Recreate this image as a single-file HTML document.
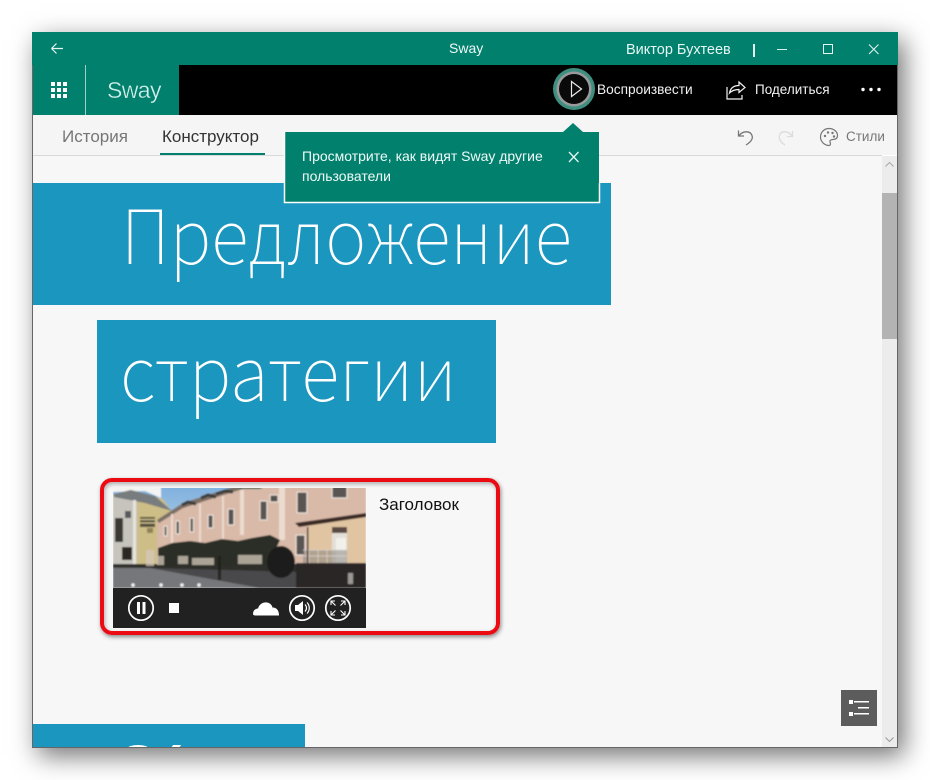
<!DOCTYPE html>
<html lang="ru">
<head>
<meta charset="utf-8">
<title>Sway</title>
<style>
html,body{margin:0;padding:0;width:930px;height:780px;overflow:hidden;background:#fff;font-family:"Liberation Sans",sans-serif}
.abs,.t{position:absolute}
.t{white-space:nowrap;line-height:1}
#win{position:absolute;left:32px;top:32px;width:866px;height:716px;box-shadow:6px 8px 24px rgba(0,0,0,.55)}
svg{position:absolute;overflow:visible}
.big{color:#fff;transform-origin:0 0;font-size:75px;font-family:"Noto Sans CJK JP","Noto Sans CJK SC",sans-serif;font-weight:100}
</style>
</head>
<body>
<div id="win" class="abs"></div>
<div class="abs" style="left:33px;top:155px;width:849px;height:592px;background:#f7f7f7"></div>
<!-- title bar -->
<div class="abs" style="left:32px;top:32px;width:866px;height:33px;background:#02806e"></div>
<div class="abs" style="left:33px;top:65px;width:146px;height:50px;background:#02806e"></div>
<div class="abs" style="left:179px;top:65px;width:718px;height:50px;background:#000"></div>
<div class="abs" style="left:33px;top:115px;width:864px;height:40px;background:#f5f5f5"></div>
<div class="abs" style="left:33px;top:155px;width:849px;height:1px;background:#d9d9d9"></div>

<svg style="left:0;top:0" width="930" height="780" fill="none">
 <path d="M51.5 48.500H63M51.500 48.500L56.500 43.500M51.500 48.500L56.500 53.500" stroke="#e8f5f2" stroke-width="1.200"/>
 <g fill="#fff">
  <rect x="51" y="82" width="4" height="4"/><rect x="57" y="82" width="4" height="4"/><rect x="63" y="82" width="4" height="4"/>
  <rect x="51" y="88" width="4" height="4"/><rect x="57" y="88" width="4" height="4"/><rect x="63" y="88" width="4" height="4"/>
  <rect x="51" y="94" width="4" height="4"/><rect x="57" y="94" width="4" height="4"/><rect x="63" y="94" width="4" height="4"/>
 </g>
 <rect x="85" y="65" width="1" height="50" fill="#9fd0c7"/>
 <rect x="753" y="44" width="2" height="13" fill="#e0f3ef"/>
 <rect x="777" y="49" width="10" height="1" fill="#d8efea"/>
 <rect x="823.500" y="44.500" width="9" height="9" stroke="#e8f5f2"/>
 <path d="M869 44.500L878.500 54M878.500 44.500L869 54" stroke="#e8f5f2"/>
 <!-- play -->
 <circle cx="574" cy="89" r="21" fill="#3f8f80"/>
 <circle cx="574" cy="89" r="17.500" fill="#9a9a9a"/>
 <circle cx="574" cy="89" r="15" fill="#0a0a0a"/>
 <path d="M571.500 81.500L581.500 89L571.500 96.500Z" stroke="#e8e8e8" stroke-width="1.200"/>
 <!-- share -->
 <path d="M727 87V99H742V95M729.500 93C730.500 88 734 85.500 739 85.500V82L745 87.500L739 92.500V89.500C735 89.500 732 90.500 729.500 93Z" stroke="#f2f2f2" stroke-width="1.200"/>
 <g fill="#fff"><circle cx="863" cy="89.500" r="1.700"/><circle cx="871" cy="89.500" r="1.700"/><circle cx="879" cy="89.500" r="1.700"/></g>
 <!-- undo -->
 <path d="M738.500 130.500V136H744M739 136C742 131 750 130 752 135.500C753.500 139.500 750 142.500 746 145" stroke="#777" stroke-width="1.300"/>
 <path d="M792.500 131V136.500H787M792 136C789 131 781 130 779.500 135.500C778.500 139.500 781 142.500 785 145" stroke="#dcdcdc" stroke-width="1.300"/>
 <!-- palette -->
 <path d="M829 128.500C824 128.500 820.500 132.500 820.500 137C820.500 141.500 824.500 145.500 829 145.500C831 145.500 830.500 143 830 142C829.500 140.500 831 139.500 833 139.500C836 139.500 837.500 138 837.500 135.500C837.500 131.500 833.500 128.500 829 128.500Z" stroke="#777" stroke-width="1.200"/>
 <g fill="#777"><circle cx="825" cy="136" r="1.200"/><circle cx="828" cy="132.500" r="1.200"/><circle cx="832.500" cy="133" r="1.200"/><circle cx="834" cy="136.500" r="1.200"/></g>
 <rect x="160" y="153" width="105" height="2" fill="#02806e"/>
</svg>

<div class="t" style="left:449px;top:41px;font-size:14px;color:#f0faf8">Sway</div>
<div class="t" style="left:626px;top:43px;font-size:14.500px;color:#e6f7f3">Виктор Бухтеев</div>
<div class="t" style="left:107px;top:79px;font-size:23px;letter-spacing:-.6px;color:#d5f0ea;-webkit-text-stroke:.35px #02806e">Sway</div>
<div class="t" style="left:597px;top:83px;font-size:13.700px;color:#f2f2f2">Воспроизвести</div>
<div class="t" style="left:755px;top:83px;font-size:13.500px;color:#f2f2f2">Поделиться</div>
<div class="t" style="left:62px;top:128px;font-size:17px;color:#767676">История</div>
<div class="t" style="left:162px;top:128px;font-size:17px;color:#333">Конструктор</div>
<div class="t" style="left:846px;top:130px;font-size:13.500px;color:#777">Стили</div>

<!-- canvas blocks -->
<div class="abs" style="left:33px;top:183px;width:578px;height:122px;background:#1b96bf"></div>
<div class="abs" style="left:97px;top:320px;width:399px;height:123px;background:#1b96bf"></div>
<div class="abs" style="left:33px;top:724px;width:272px;height:23px;background:#1b96bf;overflow:hidden">
 <div class="abs" style="left:95px;top:21px;width:20px;height:6px;border-radius:50%;background:#fff"></div>
 <div class="abs" style="left:139px;top:21px;width:8px;height:3px;background:#fff;transform:skewX(-40deg)"></div>
</div>
<div class="t big" style="left:120.500px;top:194px;transform:scaleX(.934)">Предложение</div>
<div class="t big" style="left:120px;top:331px;transform:scaleX(.955)">стратегии</div>

<!-- tooltip -->
<svg style="left:0;top:0" width="930" height="780" fill="none">
 <path d="M284.500 132H563L573 123L583 132H599V202.500H284.500Z" fill="#02806e"/>
 <path d="M284.500 132V202.500H599.500V183" stroke="#fff" stroke-width="1.500"/>
 <path d="M569 152L578.500 162M578.500 152L569 162" stroke="#e6f7f3" stroke-width="1.300"/>
</svg>
<div class="t" style="left:302px;top:149px;font-size:14px;color:#f0faf8">Просмотрите, как видят Sway другие</div>
<div class="t" style="left:302px;top:169px;font-size:14px;color:#f0faf8">пользователи</div>

<!-- scrollbar -->
<div class="abs" style="left:882px;top:156px;width:15px;height:591px;background:#ececec"></div>
<div class="abs" style="left:882px;top:193px;width:15px;height:146px;background:#b3b3b3"></div>
<svg style="left:0;top:0" width="930" height="780" fill="none">
 <path d="M885.500 166.500L889.500 162.500L893.500 166.500" stroke="#a8a8a8"/>
 <path d="M885.500 737.500L889.500 741.500L893.500 737.500" stroke="#999"/>
</svg>
<!-- window edge -->
<div class="abs" style="left:32px;top:65px;width:1px;height:683px;background:#666"></div>
<div class="abs" style="left:897px;top:65px;width:1px;height:683px;background:#666"></div>
<div class="abs" style="left:32px;top:747px;width:866px;height:1px;background:#666"></div>
<!-- list button -->
<div class="abs" style="left:841px;top:690px;width:36px;height:36px;background:#5c5c5c"></div>
<svg style="left:0;top:0" width="930" height="780">
 <rect x="849" y="700" width="4" height="4" fill="#fff"/>
 <rect x="849" y="712" width="4" height="4" fill="#fff"/>
 <rect x="854" y="701" width="15" height="1.500" fill="#fff"/>
 <rect x="858" y="707" width="11" height="1.500" fill="#fff"/>
 <rect x="854" y="713" width="15" height="1.500" fill="#fff"/>
</svg>

<!-- media card -->
<svg style="left:113px;top:488px;overflow:hidden" width="253" height="140" viewBox="113 488 253 140">
 <defs>
  <linearGradient id="sky" x1="0" y1="0" x2="0" y2="1"><stop offset="0" stop-color="#7fb0de"/><stop offset="1" stop-color="#d6e3ec"/></linearGradient>
  <filter id="b" x="-5%" y="-5%" width="110%" height="110%"><feGaussianBlur stdDeviation=".75"/></filter>
 </defs>
 <g filter="url(#b)">
 <rect x="113" y="486" width="253" height="90" fill="url(#sky)"/>
 <path d="M113 486H161V498L145 491L113 492Z" fill="#f4f4f2"/>
 <!-- left building -->
 <path d="M113 495L130 490L163 499L172 512V566H113Z" fill="#cdbd86"/>
 <path d="M113 496L137 499V564H113Z" fill="#c6c4bc"/>
 <path d="M114 494L131 490L155 496L172 511L145 503L114 497Z" fill="#787c7e"/>
 <rect x="115" y="518" width="8" height="24" fill="#3b3835"/>
 <rect x="125" y="511" width="6" height="7" fill="#57585c"/>
 <rect x="122" y="547" width="10" height="13" fill="#2a2623"/>
 <rect x="133" y="500" width="3" height="64" fill="#e6e4dc"/>
 <rect x="140" y="517" width="15" height="10" fill="#55503c"/>
 <path d="M140 519.500H155M140 523H155" stroke="#e0d39e" stroke-width="1"/>
 <rect x="147" y="528" width="6" height="5" fill="#8f8254"/>
 <!-- main pink building -->
 <path d="M157 522L183 505L220 492L240 486H366V570H157Z" fill="#d9b9a8"/>
 <path d="M157 520L183 503L220 491L240 485H256L220 496L183 508L159 523Z" fill="#7c6f66"/>
 <path d="M182 505L188 502L196 504M201 498L208 495L216 497M216 494L225 491L233 492" stroke="#3c3b38" stroke-width="3" fill="none"/>
 <path d="M238 489L248 484H268L260 489Z" fill="#4f6b5c"/>
 <path d="M171 514H173V555H171ZM199 504H201V555H199ZM222 496H224V540H222ZM240 490H244V535H240ZM279 487H285V540H279Z" fill="#ecdcd0"/>
 <g fill="#5a5552" stroke="#efe6df" stroke-width="1">
  <rect x="164" y="526" width="3" height="10"/><rect x="176" y="521" width="3.500" height="13"/>
  <rect x="190" y="518" width="3.500" height="14"/><rect x="208" y="515" width="5" height="13"/><rect x="228" y="509" width="6" height="16"/><rect x="260" y="501" width="7" height="19"/><rect x="297" y="492" width="10" height="21"/><rect x="332" y="486" width="15" height="12"/>
  <rect x="296" y="535" width="9" height="20"/>
 </g>
 <rect x="270" y="495" width="8" height="7" fill="#55514e" stroke="#eee6df"/>
 <!-- porch -->
 <path d="M307 525L366 516V565H307Z" fill="#e1c5a2"/>
 <path d="M295 523L366 513V517L299 527Z" fill="#3b2c28"/>
 <rect x="332" y="528" width="15" height="36" fill="#e3dfd8"/>
 <rect x="332" y="527" width="15" height="6" fill="#5a4a42"/>
 <rect x="336" y="538" width="10" height="24" fill="#f2f0eb"/>
 <path d="M303 550H347V564H303Z" fill="#8b8580" opacity=".55"/>
 <path d="M303 550H347M303 556H347M309 550V564M318 550V564M327 550V564" stroke="#dcd6cf" stroke-width=".7"/>
 <rect x="307" y="527" width="1.500" height="37" fill="#3b2c28"/>
 <!-- ground -->
 <rect x="113" y="566" width="253" height="22" fill="#484a4b"/>
 <path d="M113 568H150L260 588H113Z" fill="#74777a"/>
 <path d="M113 564H298V572L113 567Z" fill="#2e2d2a"/>
 <rect x="296" y="563" width="70" height="25" fill="#2b2725"/>
 <rect x="348" y="573" width="5" height="11" fill="#9b9894"/>
 <!-- shrubs -->
 <path d="M158 566V548L172 543L190 541L205 543L222 539L238 541L252 538L270 535L280 540L268 566Z" fill="#2a2e25"/>
 <g fill="#d6cabc" opacity=".75">
  <rect x="146" y="550" width="8" height="16"/><rect x="157" y="556" width="7" height="9"/><rect x="178" y="556" width="10" height="8"/><rect x="192" y="558" width="22" height="7"/><rect x="238" y="555" width="24" height="9"/>
 </g>
 <ellipse cx="281" cy="562" rx="14" ry="16" fill="#1d1e1b"/>
 <rect x="218" y="556" width="3" height="24" fill="#22231f"/>
 <g fill="#f2f2f2"><circle cx="133" cy="585" r="1.800"/><circle cx="161" cy="585" r="1.800"/><circle cx="182" cy="585" r="1.800"/><circle cx="199" cy="585" r="1.800"/></g>
 </g>
 <!-- control bar -->
 <rect x="113" y="588" width="253" height="40" fill="#212121"/>
 <g fill="none" stroke="#fff" stroke-width="1.700">
  <circle cx="141" cy="608" r="12.200"/><circle cx="302" cy="608" r="12.200"/><circle cx="338" cy="608" r="12.200"/>
 </g>
 <rect x="137" y="602" width="3" height="12" fill="#fff"/><rect x="142.500" y="602" width="3" height="12" fill="#fff"/>
 <rect x="169" y="603" width="10" height="10" fill="#fff"/>
 <path d="M253 614C253 610 256 608.500 258 608.500C259.500 604 263 602 267 602.500C270 603 272 605 272.500 607.500C276 607.500 279 609.500 279 615.500H256C254 615.500 253 615 253 614Z" fill="#fff"/>
 <path d="M295 605H298L303 601V615L298 611H295Z" fill="#fff"/>
 <path d="M305 604.500C307 606.500 307 609.500 305 611.500M307 602.500C310 605.500 310 610.500 307 613.500" stroke="#fff" fill="none" stroke-width="1.200"/>
 <path d="M331 605V601H335M331 601L335.500 605.500M345 605V601H341M345 601L340.500 605.500M331 611V615H335M331 615L335.500 610.500M345 611V615H341M345 615L340.500 610.500" stroke="#fff" fill="none" stroke-width="1.100"/>
</svg>
<div class="t" style="left:379px;top:496px;font-size:17px;color:#111">Заголовок</div>
<!-- red highlight -->
<div class="abs" style="left:100px;top:478px;width:392px;height:149px;border:4px solid #ec0b12;border-radius:12px;box-shadow:1px 2px 4px rgba(0,0,0,.45), inset 1px 2px 4px rgba(0,0,0,.3)"></div>
</body>
</html>
